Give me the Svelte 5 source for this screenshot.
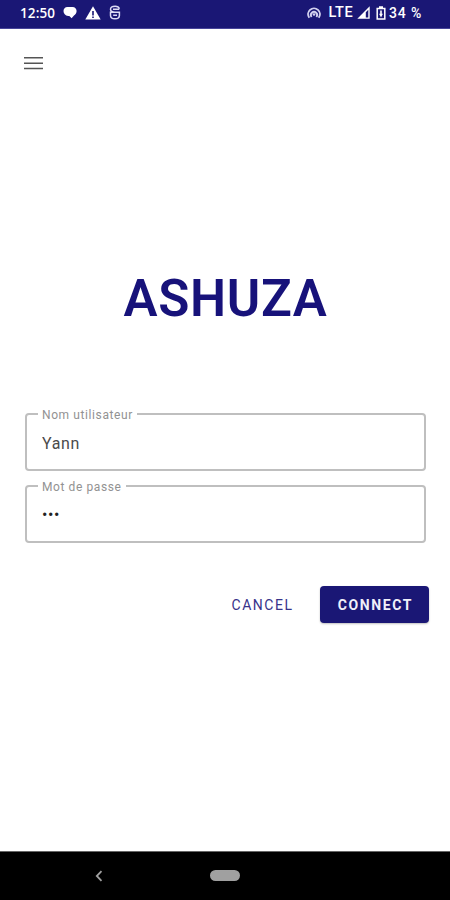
<script>
  let username = $state('Yann');
  let password = $state('•••');

  const clock = '12:50';
  const network = 'LTE';
  const battery = '34 %';
</script>

<div class="screen">
  <header class="status-bar">
    <div class="status-left">
      <span class="clock">{clock}</span>
      <svg class="chat-icon" width="14" height="13" viewBox="0 0 14 13">
        <path fill="#fff" d="M4.500 0.900h5C12 0.900 13.600 2.600 13.600 5c0 2.200-1.300 3.700-2.600 4.500L8.600 12.300 6.300 10.100H5.200C2.200 9.900 0.500 7.500 0.500 5.100S2 0.900 4.500 0.900z" />
      </svg>
      <svg class="warning-icon" width="16" height="14" viewBox="0 0 16 14">
        <path fill="#fff" d="M8 0.300L15.700 13.600H0.300z" />
        <path fill="#1a1775" d="M7.200 5h1.600v4.400H7.200zM7.200 10.500h1.600V12H7.200z" />
      </svg>
      <svg class="app-icon" width="12" height="15" viewBox="0 0 12 15" fill="none" stroke="#dddcf5" stroke-width="1.500">
        <path d="M10.400 3.800C9.800 1.900 8.200 1.200 6.200 1.200 3.300 1.200 1.500 2.300 1.500 4.300c0 2 1.500 2.900 4.500 2.900h4.400v3.300c0 2-1.700 3.300-4.400 3.300s-4.500-1.300-4.500-3.300V7.200h4" />
        <path d="M4 4.200h6.300M4.200 10.300h3.800" />
      </svg>
    </div>
    <div class="status-right">
      <svg class="hotspot-icon" width="14" height="13" viewBox="0 0 14 13" fill="none" stroke="#d2d1ef" stroke-width="1.900">
        <path d="M2.300 11.800A5.900 5.900 0 1 1 11.700 11.800" />
        <path d="M4.600 11A3.100 3.100 0 1 1 9.400 11" />
        <circle cx="7" cy="8.500" r="1.300" fill="#d2d1ef" stroke="none" />
      </svg>
      <span class="network">{network}</span>
      <svg class="signal-icon" width="13" height="13" viewBox="0 0 13 13">
        <path fill="#fff" fill-rule="evenodd" d="M12.700 0.300v12.400H0.300zM8.800 6.200v5.200h2.500V3.700z" />
      </svg>
      <svg class="battery-icon" width="10" height="14" viewBox="0 0 10 14">
        <path fill="none" stroke="#fff" stroke-width="1.500" d="M1.200 2.400h7.600v10.700H1.200z" />
        <path fill="#fff" d="M3 0.300h4v2H3zM4.200 4.500h1.600v3.200h1.100L5 11.500 3.100 7.700h1.100z" />
      </svg>
      <span class="battery">{battery}</span>
    </div>
  </header>

  <nav class="toolbar">
    <button class="menu-button" aria-label="Menu">
      <svg width="19" height="14" viewBox="0 0 19 14" stroke="#555" stroke-width="1.600">
        <path d="M0 1.800h19M0 7.200h19M0 12.500h19" />
      </svg>
    </button>
  </nav>

  <main class="content">
    <h1 class="title">ASHUZA</h1>

    <form class="login-form" onsubmit={(e) => e.preventDefault()}>
      <fieldset class="field">
        <legend>Nom utilisateur</legend>
        <input type="text" aria-label="Nom utilisateur" bind:value={username} />
      </fieldset>

      <fieldset class="field">
        <legend>Mot de passe</legend>
        <input class="password" type="text" aria-label="Mot de passe" bind:value={password} />
      </fieldset>

      <div class="actions">
        <button type="button" class="btn cancel">CANCEL</button>
        <button type="submit" class="btn connect">CONNECT</button>
      </div>
    </form>
  </main>

  <footer class="nav-bar">
    <svg class="back-icon" width="8" height="12" viewBox="0 0 8 12">
      <path fill="none" stroke="#a0a0a0" stroke-width="1.800" d="M6.500 1.200L1.800 6l4.700 4.800" />
    </svg>
    <span class="home-pill"></span>
  </footer>
</div>

<style>
  :global(body) {
    margin: 0;
    background: #fff;
  }

  .screen {
    display: flex;
    flex-direction: column;
    width: 450px;
    height: 900px;
    background: #fff;
    font-family: Roboto, 'Liberation Sans', sans-serif;
    overflow: hidden;
  }

  /* Status bar */
  .status-bar {
    display: flex;
    justify-content: space-between;
    box-sizing: border-box;
    height: 29px;
    padding: 0 28px 3px 20px;
    background: #1a1775;
    border-bottom: 1px solid #48459a;
    color: #fff;
    flex-shrink: 0;
  }

  .status-left,
  .status-right {
    display: flex;
    align-items: center;
  }

  .clock {
    width: 43px;
    font-family: 'Open Sans', Roboto, sans-serif;
    font-size: 13.500px;
    font-weight: 600;
    letter-spacing: 0.100px;
  }

  .warning-icon {
    margin-left: 8px;
  }

  .app-icon {
    margin-left: 8px;
  }

  .network {
    margin-left: 8px;
    font-size: 14.500px;
    font-weight: 500;
    letter-spacing: 0.500px;
  }

  .signal-icon {
    margin-left: 4px;
  }

  .battery-icon {
    margin-left: 6px;
  }

  .battery {
    margin-left: 3px;
    font-size: 14px;
    font-weight: 500;
    letter-spacing: 0.800px;
  }

  /* Toolbar */
  .toolbar {
    height: 68px;
    padding: 0 24px;
    display: flex;
    align-items: center;
    flex-shrink: 0;
  }

  .menu-button {
    display: flex;
    padding: 0;
    border: none;
    background: none;
  }

  /* Login */
  .content {
    flex: 1;
    padding: 0 21px 0 25px;
  }

  .title {
    margin: 172px 3px 0 0;
    height: 60px;
    line-height: 60px;
    font-size: 51px;
    font-weight: 600;
    letter-spacing: 0.700px;
    text-align: center;
    color: #17127a;
  }

  .login-form {
    margin-top: 79px;
  }

  .field {
    box-sizing: border-box;
    width: 401px;
    height: 63px;
    margin: 0 0 9px;
    padding: 0 11px;
    border: 2px solid #bfbfbf;
    border-radius: 4px;
  }

  .field legend {
    height: 12px;
    padding: 0 4px;
    line-height: 15px;
    font-size: 12px;
    letter-spacing: 0.600px;
    color: #929292;
  }

  .field input {
    display: block;
    box-sizing: border-box;
    width: 100%;
    height: 46px;
    padding: 0 4px;
    border: none;
    outline: none;
    background: transparent;
    font-family: inherit;
    font-size: 16px;
    letter-spacing: 0.600px;
    color: #4a4a4a;
  }

  .field .password {
    height: 44px;
    letter-spacing: 0.600px;
    color: #222;
  }

  .actions {
    display: flex;
    justify-content: flex-end;
    gap: 10px;
    margin-top: 43px;
  }

  .btn {
    height: 37px;
    padding: 0;
    border: none;
    border-radius: 4px;
    background: transparent;
    font-family: inherit;
    font-size: 14px;
    letter-spacing: 1.500px;
  }

  .cancel {
    width: 95px;
    color: #37338a;
  }

  .connect {
    width: 109px;
    padding-left: 2px;
    background: #1a1775;
    color: #f0effa;
    font-weight: 700;
    letter-spacing: 1.600px;
    box-shadow: 0 1px 2px rgba(0, 0, 0, 0.25);
  }

  /* System navigation */
  .nav-bar {
    display: flex;
    align-items: center;
    box-sizing: border-box;
    height: 49px;
    padding: 0 0 1px 95px;
    background: #000;
    border-top: 1px solid #666;
    flex-shrink: 0;
  }

  .home-pill {
    width: 30px;
    height: 11px;
    margin-left: 107px;
    border-radius: 6px;
    background: #a0a0a0;
  }
</style>
